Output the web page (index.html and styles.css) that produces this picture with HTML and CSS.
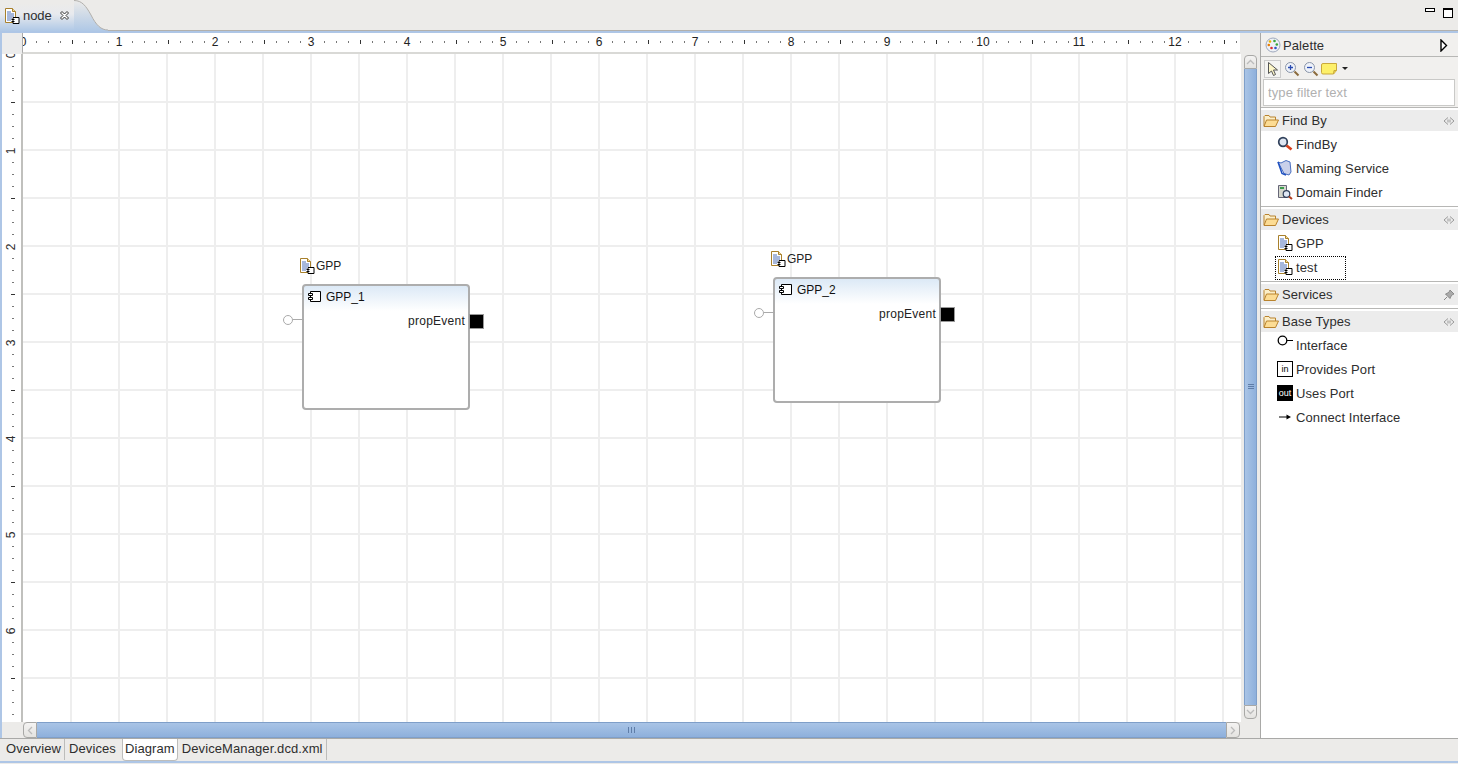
FILE: index.html
```html
<!DOCTYPE html>
<html lang="en">
<head>
    <meta charset="UTF-8">
    <meta name="viewport" content="width=device-width, initial-scale=1.0">
    <title>node</title>
    <link rel="stylesheet" href="styles.css">
</head>
<body>
    <svg class="defs" width="0" height="0">
        <symbol id="i-dev" viewBox="0 0 16 16">
            <path d="M1.500 .5h7l3 3v11h-10z" fill="#fff" stroke="#a8802c"/>
            <path d="M8.500 .5v3h3" fill="#f3dc98" stroke="#a8802c"/>
            <path d="M3 4h4M3 6h7M3 8h7M3 10h5M3 12h4" stroke="#4f70b8"/>
            <path d="M9 9.500h6v6H9z" fill="#fff" stroke="#000"/>
            <path d="M7.500 11h3v1h-3zM7.500 13h3v1h-3z" fill="#000"/>
        </symbol>
        <symbol id="i-folder" viewBox="0 0 16 16">
            <path d="M1 13V3.500l1-1h4l1 1.500h5.500V7" fill="#fbeec8" stroke="#b9832e"/>
            <path d="M3.500 7H15.500l-3 6.500H1z" fill="#fcdc94" stroke="#b9832e"/>
        </symbol>
        <symbol id="i-collapse" viewBox="0 0 12 8">
            <path d="M5 .5L1 4l4 3.500M7 .5L11 4 7 7.500M5 2.500v3M7 2.500v3" fill="none" stroke="#999"/>
        </symbol>
    </svg>

    <div class="window">
        <div class="tabbar">
            <div class="editor-tab">
                <svg class="ic16"><use href="#i-dev"/></svg>
                <span class="editor-tab-name">node</span>
                <svg class="close-x" viewBox="0 0 11 11">
                    <path d="M1.500 3L3 1.500l2.500 2.500L8 1.500 9.500 3 7 5.500 9.500 8 8 9.500 5.500 7 3 9.500 1.500 8 4 5.500z" fill="#fff" stroke="#333"/>
                </svg>
            </div>
            <svg class="tab-curve" viewBox="0 0 34 31" preserveAspectRatio="none">
                <path d="M0 0C8 0 12 6 17 15C22 25 27 30 34 30V31H0z" fill="url(#tabfill)" stroke="none"/>
                <path d="M0 .5C8 .5 12 6 17 15C22 25 27 30 34 30" fill="none" stroke="#b2b0ac"/>
                <defs>
                    <linearGradient id="tabfill" x1="0" y1="0" x2="0" y2="1">
                        <stop offset="0" stop-color="#ecebe9"/>
                        <stop offset="1" stop-color="#afc8e6"/>
                    </linearGradient>
                </defs>
            </svg>
            <div class="tabbar-fill"></div>
            <div class="win-btns">
                <span class="win-min"></span>
                <span class="win-max"></span>
            </div>
        </div>

        <div class="content">
            <div class="editor">
                <div class="ruler-row">
                    <div class="corner"></div>
                    <div class="hruler">
                        <span class="hnum"><i>0</i></span><span class="hnum"><i>1</i></span><span class="hnum"><i>2</i></span><span class="hnum"><i>3</i></span><span class="hnum"><i>4</i></span><span class="hnum"><i>5</i></span><span class="hnum"><i>6</i></span><span class="hnum"><i>7</i></span><span class="hnum"><i>8</i></span><span class="hnum"><i>9</i></span><span class="hnum"><i>10</i></span><span class="hnum"><i>11</i></span><span class="hnum"><i>12</i></span>
                    </div>
                </div>
                <div class="canvas-row">
                    <div class="vruler">
                        <span class="vnum"><i>0</i></span><span class="vnum"><i>1</i></span><span class="vnum"><i>2</i></span><span class="vnum"><i>3</i></span><span class="vnum"><i>4</i></span><span class="vnum"><i>5</i></span><span class="vnum"><i>6</i></span>
                    </div>
                    <div class="canvas">
                        <div class="node node-1">
                            <div class="node-type"><svg class="ic16"><use href="#i-dev"/></svg>GPP</div>
                            <div class="node-box">
                                <div class="node-head">
                                    <svg class="comp-ic" viewBox="0 0 13 13"><path d="M2.500 1.500h10v10h-10z" fill="#fff" stroke="#000"/><path d="M.5 3.500h4v2h-4zM.5 7.500h4v2h-4z" fill="#fff" stroke="#000"/></svg>
                                    GPP_1
                                </div>
                                <div class="node-port-row">propEvent</div>
                                <div class="uses-port"></div>
                                <div class="provides-port"></div>
                            </div>
                        </div>
                        <div class="node node-2">
                            <div class="node-type"><svg class="ic16"><use href="#i-dev"/></svg>GPP</div>
                            <div class="node-box">
                                <div class="node-head">
                                    <svg class="comp-ic" viewBox="0 0 13 13"><path d="M2.500 1.500h10v10h-10z" fill="#fff" stroke="#000"/><path d="M.5 3.500h4v2h-4zM.5 7.500h4v2h-4z" fill="#fff" stroke="#000"/></svg>
                                    GPP_2
                                </div>
                                <div class="node-port-row">propEvent</div>
                                <div class="uses-port"></div>
                                <div class="provides-port"></div>
                            </div>
                        </div>
                    </div>
                    <div class="vscroll">
                        <div class="sb-btn sb-up"><svg viewBox="0 0 9 6" class="sb-arrow"><path d="M1 5l3.500-3.500L8 5" fill="none" stroke="#bbb" stroke-width="1.300"/></svg></div>
                        <div class="vthumb"><span class="grip-v"></span></div>
                        <div class="sb-btn sb-down"><svg viewBox="0 0 9 6" class="sb-arrow"><path d="M1 1l3.500 3.500L8 1" fill="none" stroke="#bbb" stroke-width="1.300"/></svg></div>
                    </div>
                </div>
                <div class="hscroll-row">
                    <div class="hscroll">
                        <div class="sb-btn sb-left"><svg viewBox="0 0 6 9" class="sb-arrow-h"><path d="M5 1L1.500 4.500 5 8" fill="none" stroke="#bbb" stroke-width="1.300"/></svg></div>
                        <div class="hthumb"><span class="grip-h"></span></div>
                        <div class="sb-btn sb-right"><svg viewBox="0 0 6 9" class="sb-arrow-h"><path d="M1 1l3.500 3.500L1 8" fill="none" stroke="#bbb" stroke-width="1.300"/></svg></div>
                    </div>
                </div>
            </div>

            <div class="palette">
                <div class="pal-title">
                    <svg class="ic16" viewBox="0 0 16 16">
                        <circle cx="8" cy="8" r="7" fill="#eef1f6" stroke="#9fa9bd"/>
                        <circle cx="5" cy="4.500" r="1.300" fill="#e8b400"/><circle cx="9.500" cy="4" r="1.300" fill="#3aa53a"/>
                        <circle cx="3.800" cy="8" r="1.300" fill="#e87b00"/><circle cx="11.800" cy="7.500" r="1.300" fill="#3aa53a"/>
                        <circle cx="6.500" cy="11" r="1.300" fill="#d83030"/><circle cx="10.500" cy="11" r="1.300" fill="#2f55c8"/>
                    </svg>
                    <span class="pal-title-text">Palette</span>
                    <svg class="pal-arrow" viewBox="0 0 8 13"><path d="M1 1l5.500 5.500L1 12z" fill="#fff" stroke="#000" stroke-width="1.400"/></svg>
                </div>
                <div class="pal-tools">
                    <span class="tool tool-on">
                        <svg class="ic16" viewBox="0 0 16 16"><path d="M3.500 1.500v11l3-2.500 2 4.500 2-1-2-4.500h4z" fill="#fdf7c8" stroke="#555"/></svg>
                    </span>
                    <span class="tool">
                        <svg class="ic16" viewBox="0 0 16 16"><circle cx="6.500" cy="6.500" r="5" fill="#eef2fa" stroke="#8a95a8"/><path d="M4 6.500h5M6.500 4v5" stroke="#2a4bb0" stroke-width="1.300"/><path d="M10.500 10.500l4 4" stroke="#8a6a3c" stroke-width="2"/></svg>
                    </span>
                    <span class="tool">
                        <svg class="ic16" viewBox="0 0 16 16"><circle cx="6.500" cy="6.500" r="5" fill="#eef2fa" stroke="#8a95a8"/><path d="M4 6.500h5" stroke="#2a4bb0" stroke-width="1.300"/><path d="M10.500 10.500l4 4" stroke="#8a6a3c" stroke-width="2"/></svg>
                    </span>
                    <span class="tool tool-note">
                        <svg class="ic16" viewBox="0 0 16 16"><path d="M.5 4q0-1.500 1.500-1.500h13.500v7l-3 3.500H2q-1.500 0-1.500-1.500z" fill="#fdf06a" stroke="#c9a93c"/><path d="M12.500 13l.5-3.500 2.500 0" fill="#e8d050" stroke="#c9a93c"/></svg>
                    </span>
                    <span class="tool-drop"></span>
                </div>
                <div class="pal-filter-wrap">
                    <input class="pal-filter" type="text" placeholder="type filter text">
                </div>

                <div class="drawer">
                    <div class="drawer-head">
                        <svg class="ic16"><use href="#i-folder"/></svg>
                        <span class="drawer-name">Find By</span>
                        <svg class="drawer-pin"><use href="#i-collapse"/></svg>
                    </div>
                    <div class="drawer-list">
                        <div class="pal-item">
                            <svg class="ic16" viewBox="0 0 16 16"><circle cx="6" cy="6" r="4.300" fill="#dfe6f2" stroke="#30405a" stroke-width="1.700"/><path d="M9.500 9.500l5 4" stroke="#d8401c" stroke-width="2.800"/></svg>
                            <span>FindBy</span>
                        </div>
                        <div class="pal-item">
                            <svg class="ic16" viewBox="0 0 16 16"><path d="M1 2l3 1 5-2.500 4 1.500 1 10-2 3-5-1.500z" fill="#c9d0ea" stroke="#4a6fc0"/><path d="M1 2l4 11.500 4 1.500" fill="none" stroke="#1e50c0" stroke-width="1.500"/></svg>
                            <span>Naming Service</span>
                        </div>
                        <div class="pal-item">
                            <svg class="ic16" viewBox="0 0 16 16"><path d="M1.500 1.500h8v12h-8z" fill="#d6d8cf" stroke="#667"/><path d="M3 3h4v2H3z" fill="#3c9c4c"/><circle cx="9.500" cy="10" r="3.300" fill="#dfe8f5" stroke="#30405a" stroke-width="1.200"/><path d="M12 12.500l3 2.500" stroke="#b03c1c" stroke-width="2"/></svg>
                            <span>Domain Finder</span>
                        </div>
                    </div>
                </div>

                <div class="drawer">
                    <div class="drawer-head">
                        <svg class="ic16"><use href="#i-folder"/></svg>
                        <span class="drawer-name">Devices</span>
                        <svg class="drawer-pin"><use href="#i-collapse"/></svg>
                    </div>
                    <div class="drawer-list">
                        <div class="pal-item">
                            <svg class="ic16"><use href="#i-dev"/></svg>
                            <span>GPP</span>
                        </div>
                        <div class="pal-item pal-item-focus">
                            <svg class="ic16"><use href="#i-dev"/></svg>
                            <span>test</span>
                        </div>
                    </div>
                </div>

                <div class="drawer drawer-closed">
                    <div class="drawer-head">
                        <svg class="ic16"><use href="#i-folder"/></svg>
                        <span class="drawer-name">Services</span>
                        <svg class="drawer-pin" viewBox="0 0 12 12"><path d="M7 1l4 4-1.500.5L7.500 8 7 9.500 2.500 5 4 4.500 6.500 2.500zM4 8l-3 3" fill="#aaa" stroke="#888"/></svg>
                    </div>
                </div>

                <div class="drawer drawer-last">
                    <div class="drawer-head">
                        <svg class="ic16"><use href="#i-folder"/></svg>
                        <span class="drawer-name">Base Types</span>
                        <svg class="drawer-pin"><use href="#i-collapse"/></svg>
                    </div>
                    <div class="drawer-list">
                        <div class="pal-item">
                            <svg class="ic16 ic-raise" viewBox="0 0 16 16"><circle cx="5.500" cy="6.500" r="4.300" fill="#fff" stroke="#000" stroke-width="1.300"/><path d="M10 6.500h6" stroke="#000"/></svg>
                            <span>Interface</span>
                        </div>
                        <div class="pal-item">
                            <span class="port-tag port-in">in</span>
                            <span>Provides Port</span>
                        </div>
                        <div class="pal-item">
                            <span class="port-tag port-out">out</span>
                            <span>Uses Port</span>
                        </div>
                        <div class="pal-item">
                            <svg class="ic16" viewBox="0 0 16 16"><path d="M2 8h9" stroke="#000"/><path d="M9.500 5.500L14 8l-4.500 2.500z" fill="#000"/></svg>
                            <span>Connect Interface</span>
                        </div>
                    </div>
                </div>
            </div>
        </div>

        <div class="bottom-tabs">
            <span class="btab">Overview</span>
            <span class="btab btab-before">Devices</span>
            <span class="btab btab-on">Diagram</span>
            <span class="btab">DeviceManager.dcd.xml</span>
        </div>
        <div class="bottom-line"></div>
    </div>
</body>
</html>
```

FILE: styles.css
```css
* {
    box-sizing: border-box;
}
html, body {
    margin: 0;
    height: 100%;
    overflow: hidden;
}
body {
    font-family: "Liberation Sans", Arial, sans-serif;
    font-size: 13px;
    color: #2e2e2e;
    background: #ecebe9;
}
.defs {
    position: absolute;
}
.ic16 {
    width: 16px;
    height: 16px;
    flex: none;
}

.window {
    height: 764px;
    display: flex;
    flex-direction: column;
}

/* editor tab on top */
.tabbar {
    height: 31px;
    display: flex;
    flex: none;
}
.editor-tab {
    width: 74px;
    padding: 8px 0 0 4px;
    display: flex;
    align-items: flex-start;
    gap: 3px;
    background: linear-gradient(#ecebe9 10%, #e8eaee 45%, #afc8e6);
}
.editor-tab-name {
    line-height: 16px;
    letter-spacing: -.1px;
}
.close-x {
    width: 11px;
    height: 11px;
    margin: 2px 0 0 4px;
}
.tab-curve {
    width: 34px;
    height: 31px;
    flex: none;
}
.tabbar-fill {
    flex: 1;
    border-bottom: 1px solid #b2b0ac;
}
.win-btns {
    width: 40px;
    padding: 8px 5px 0 0;
    display: flex;
    justify-content: flex-end;
    align-items: flex-start;
    gap: 8px;
    border-bottom: 1px solid #b2b0ac;
}
.win-min {
    width: 10px;
    height: 4px;
    border: 1px solid #000;
    background: #fff;
}
.win-max {
    width: 10px;
    height: 10px;
    border: 1px solid #000;
    border-top-width: 2px;
    background: #fff;
}

.content {
    height: 707px;
    flex: none;
    display: flex;
    border-top: 2px solid #aec6e6;
    border-left: 2px solid #aec6e6;
}

/* diagram side */
.editor {
    width: 1259px;
    flex: none;
    display: flex;
    flex-direction: column;
    border-right: 1px solid #a9a9a7;
}
.ruler-row {
    height: 21px;
    display: flex;
    flex: none;
}
.corner {
    width: 20px;
    flex: none;
    background: #ececec;
}
.hruler {
    width: 1218px;
    height: 21px;
    overflow: hidden;
    display: flex;
    font-size: 12px;
    line-height: 19px;
    background:
        repeating-linear-gradient(90deg, #333 0 1px, transparent 1px 48px) 1px 7px / 100% 4px no-repeat,
        repeating-linear-gradient(90deg, #777 0 1px, transparent 1px 12px) 1px 8px / 100% 2px no-repeat,
        #fff;
    border-bottom: 2px solid #d9d9d6;
    border-left: 1px solid #aaa;
}
.hnum {
    width: 96px;
    flex: none;
    text-align: center;
    transform: translateX(-48px);
    color: #222;
}
.hnum i, .vnum i {
    display: inline-block;
    font-style: normal;
    background: #fff;
    padding: 0 1px;
}
.canvas-row {
    height: 668px;
    flex: none;
    display: flex;
}
.vruler {
    width: 21px;
    flex: none;
    overflow: hidden;
    border-right: 2px solid #c0c0bd;
    display: flex;
    flex-direction: column;
    font-size: 12px;
    background:
        repeating-linear-gradient(180deg, #333 0 1px, transparent 1px 48px) 9px 0 / 4px 100% no-repeat,
        repeating-linear-gradient(180deg, #777 0 1px, transparent 1px 12px) 10px 0 / 2px 100% no-repeat,
        #fff;
}
.vnum {
    height: 96px;
    flex: none;
    display: flex;
    align-items: center;
    justify-content: center;
    transform: translateY(-47px);
}
.vnum i {
    transform: rotate(-90deg);
}
.canvas {
    position: relative;
    width: 1218px;
    flex: none;
    overflow: hidden;
    background:
        repeating-linear-gradient(90deg, #eee 0 2px, transparent 2px 48px) 47px 0 / 100% 100% no-repeat,
        repeating-linear-gradient(180deg, #eee 0 2px, transparent 2px 48px) 0 47px / 100% 100% no-repeat,
        #fff;
}

/* nodes of the diagram */
.node {
    position: absolute;
    width: 190px;
    font-size: 12px;
}
.node-1 {
    left: 276px;
    top: 202px;
}
.node-2 {
    left: 747px;
    top: 195px;
}
.node-type {
    height: 20px;
    display: flex;
    align-items: center;
    gap: 1px;
    color: #222;
}
.node-box {
    position: relative;
    width: 168px;
    height: 126px;
    margin: 8px 0 0 3px;
    background: linear-gradient(#dce9f6, #fff 25px);
    border: 2px solid #adadad;
    border-radius: 4px;
}
.node-head {
    height: 21px;
    padding-left: 4px;
    display: flex;
    align-items: center;
    gap: 5px;
    color: #111;
}
.comp-ic {
    width: 13px;
    height: 13px;
}
.node-port-row {
    height: 23px;
    padding: 5px 3px 0 0;
    text-align: right;
    line-height: 18px;
    letter-spacing: .25px;
    color: #222;
}
.uses-port {
    position: absolute;
    right: -16px;
    top: 28px;
    width: 15px;
    height: 15px;
    background: #000;
    border: 1px solid #999;
}
.provides-port {
    position: absolute;
    left: -21px;
    top: 29px;
    width: 10px;
    height: 10px;
    background: #fff;
    border: 1px solid #aaa;
    border-radius: 50%;
}
.provides-port::after {
    content: "";
    position: absolute;
    left: 9px;
    top: 3px;
    width: 11px;
    height: 1px;
    background: #aaa;
}

/* scrollbars */
.vscroll {
    width: 19px;
    flex: none;
    padding: 1px 3px 3px 3px;
    display: flex;
    flex-direction: column;
    background: #ecebe9;
}
.sb-btn {
    flex: none;
    display: flex;
    align-items: center;
    justify-content: center;
    background: linear-gradient(#f4f3f2, #e4e3e0);
    border: 1px solid #a8a8a6;
}
.sb-up {
    height: 14px;
    border-radius: 4px 4px 0 0;
}
.sb-down {
    height: 14px;
    border-radius: 0 0 4px 4px;
}
.sb-left {
    width: 14px;
    border-radius: 4px 0 0 4px;
}
.sb-right {
    width: 14px;
    border-radius: 0 4px 4px 0;
}
.sb-arrow {
    width: 9px;
    height: 6px;
}
.sb-arrow-h {
    width: 6px;
    height: 9px;
}
.vthumb {
    flex: 1;
    display: flex;
    align-items: center;
    justify-content: center;
    background: linear-gradient(90deg, #a9c4e6, #8eb0dc);
    border-left: 1px solid #7f9fc9;
    border-right: 1px solid #7f9fc9;
}
.grip-v {
    width: 6px;
    height: 6px;
    background: repeating-linear-gradient(180deg, #5f7da8 0 1px, transparent 1px 2px);
}
.hscroll-row {
    height: 16px;
    flex: none;
    padding-left: 21px;
}
.hscroll {
    width: 1217px;
    height: 16px;
    display: flex;
}
.hthumb {
    flex: 1;
    display: flex;
    align-items: center;
    justify-content: center;
    background: linear-gradient(#a9c4e6, #8eb0dc);
    border-top: 1px solid #7f9fc9;
    border-bottom: 1px solid #7f9fc9;
}
.grip-h {
    width: 7px;
    height: 6px;
    background: repeating-linear-gradient(90deg, #5f7da8 0 1px, transparent 1px 3px);
}

/* palette */
.palette {
    flex: 1;
    min-width: 0;
    display: flex;
    flex-direction: column;
    background: #fff;
    letter-spacing: .1px;
}
.pal-title {
    height: 24px;
    padding: 1px 10px 0 4px;
    display: flex;
    align-items: center;
    gap: 2px;
    background: #f1f0ee;
    border-bottom: 1px solid #b7b7b5;
}
.pal-title-text {
    flex: 1;
}
.pal-arrow {
    width: 8px;
    height: 13px;
}
.pal-tools {
    height: 22px;
    padding: 1px 0 0 3px;
    display: flex;
    align-items: center;
    gap: 3px;
    background: #f1f0ee;
}
.tool {
    width: 16px;
    height: 18px;
    display: flex;
    align-items: center;
    justify-content: center;
}
.tool-on {
    width: 17px;
    border: 1px solid #ccc;
    background: #f4f4f2;
}
.tool-note {
    margin-left: -1px;
}
.tool-drop {
    width: 0;
    height: 0;
    margin-left: 2px;
    border-left: 3px solid transparent;
    border-right: 3px solid transparent;
    border-top: 3px solid #222;
}
.pal-filter-wrap {
    height: 29px;
    padding: 0 3px 1px 2px;
    background: #f1f0ee;
    border-bottom: 1px solid #b7b7b5;
}
.pal-filter {
    display: block;
    width: 100%;
    height: 27px;
    padding: 0 4px;
    border: 1px solid #c9c9c7;
    font: 13px "Liberation Sans", Arial, sans-serif;
    letter-spacing: .1px;
    outline: none;
}
.pal-filter::placeholder {
    color: #b0b0b0;
    opacity: 1;
}
.drawer {
    border-bottom: 1px solid #b7b7b5;
    padding-top: 2px;
}
.drawer-closed {
    padding-bottom: 3px;
}
.drawer-last {
    border-bottom: 0;
}
.drawer-head {
    height: 21px;
    padding: 0 3px 0 2px;
    display: flex;
    align-items: center;
    gap: 3px;
    background: #ececec;
}
.drawer-name {
    flex: 1;
}
.drawer-pin {
    width: 12px;
    height: 8px;
}
.drawer-closed .drawer-pin {
    height: 12px;
}
.drawer-list {
    padding: 1px 0 2px 0;
}
.pal-item {
    height: 24px;
    padding-left: 16px;
    display: flex;
    align-items: center;
    gap: 3px;
}
.pal-item-focus {
    position: relative;
}
.pal-item-focus::before {
    content: "";
    position: absolute;
    left: 14px;
    top: 1px;
    width: 69px;
    height: 22px;
    border: 1px dotted #000;
}
.ic-raise {
    margin-top: -6px;
}
.port-tag {
    width: 16px;
    height: 16px;
    flex: none;
    font-size: 9px;
    line-height: 14px;
    text-align: center;
    letter-spacing: 0;
    border: 1px solid #000;
}
.port-in {
    background: #fff;
    color: #000;
}
.port-out {
    background: #000;
    color: #fff;
}

/* bottom tabs */
.bottom-tabs {
    height: 23px;
    flex: none;
    padding-left: 2px;
    display: flex;
    align-items: flex-start;
    border-top: 1px solid #a9a9a7;
    letter-spacing: .1px;
}
.btab {
    height: 21px;
    padding: 0 3px 0 4px;
    line-height: 20px;
    border-right: 1px solid #bdbdbb;
}
.btab-before {
    padding-right: 6px;
    border-right: 0;
}
.btab-on {
    padding: 0 2px;
    background: #fff;
    border: 1px solid #bdbdbb;
    border-top: 0;
    border-radius: 0 0 4px 4px;
    height: 22px;
}
.bottom-line {
    height: 3px;
    flex: none;
    border-top: 2px solid #aec6e6;
}
```
